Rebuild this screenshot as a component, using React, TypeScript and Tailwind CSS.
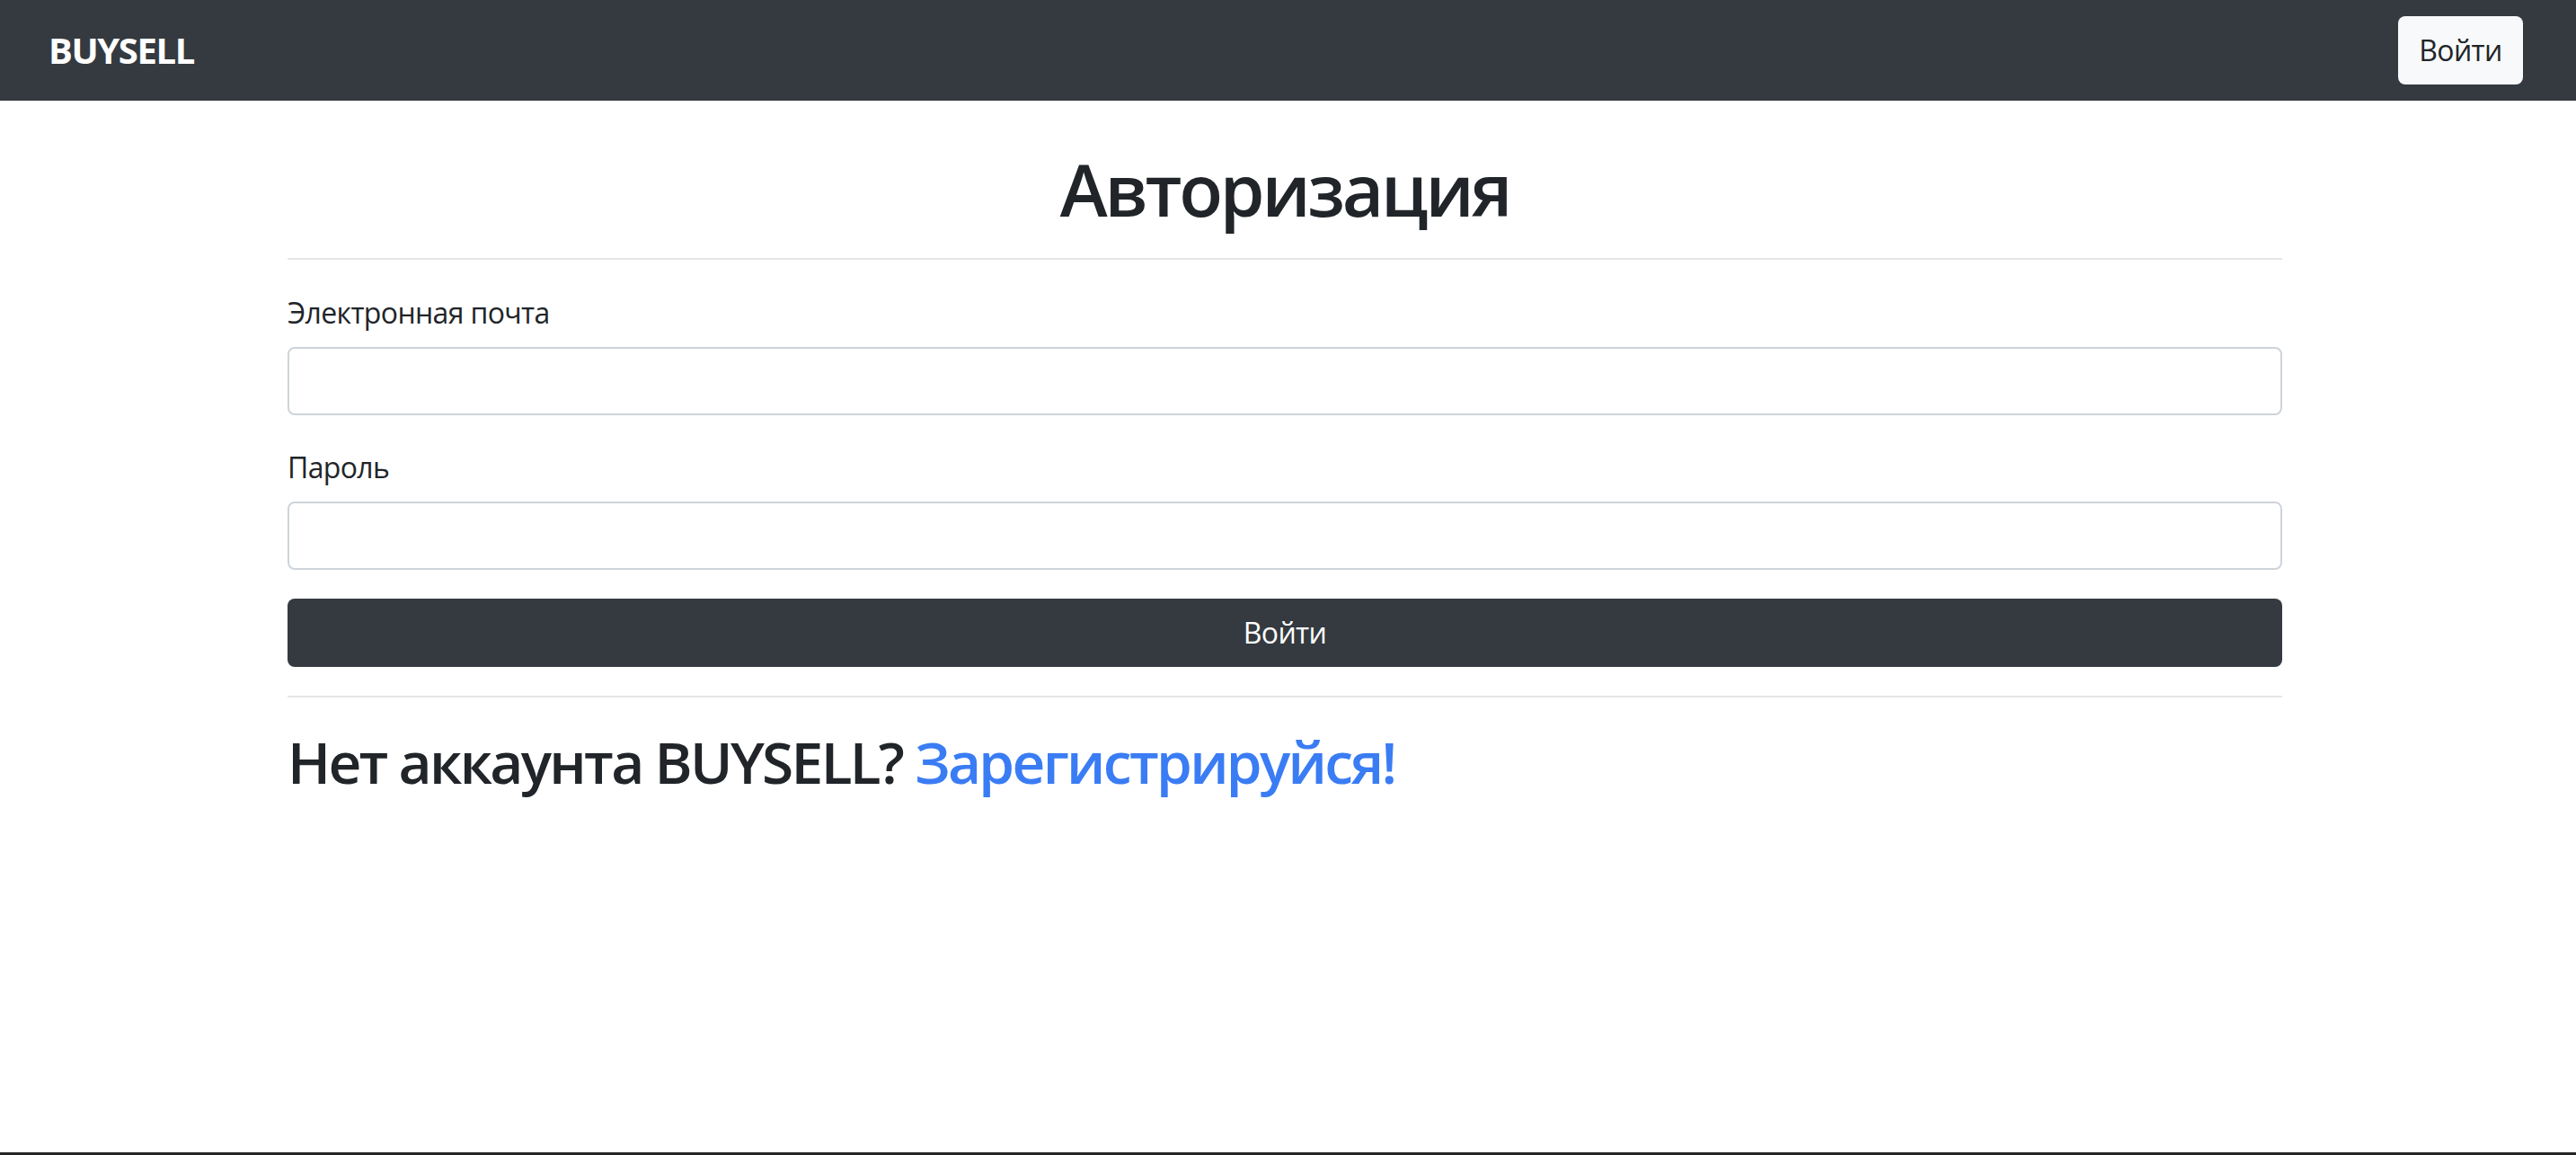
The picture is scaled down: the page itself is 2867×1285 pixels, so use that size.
export default function App() {
  return (
    <div className="min-h-screen bg-white text-[#212529] tracking-[-0.04em] [font-family:'Open_Sans',sans-serif]">
      {/* Navbar */}
      <nav className="flex h-[112px] items-center justify-between bg-[#343a40] pl-[54px] pr-[59px]">
        <a href="#" className="text-[40px] leading-[60px] font-bold tracking-[-0.035em] text-white">
          BUYSELL
        </a>
        <button className="h-[76px] w-[139px] rounded-[8px] bg-[#f8f9fa] text-[32px] leading-[48px] text-[#212529]">
          Войти
        </button>
      </nav>

      <main className="h-[1170px]">
        <div className="ml-[320px] w-[2220px] pt-[50px]">
          <h1 className="text-center text-[80px] leading-[96px] font-semibold tracking-[-0.04em]">
            Авторизация
          </h1>
          <hr className="mt-[29px] border-0 border-t-2 border-[#e6e6e6]" />

          <form className="mt-[35px]" onSubmit={(e) => e.preventDefault()}>
            <label className="block text-[32px] leading-[48px]">Электронная почта</label>
            <input
              type="email"
              className="mt-[14px] block h-[76px] w-full rounded-[8px] border-2 border-[#ced4da] px-[24px] text-[32px] outline-none"
            />

            <label className="mt-[34px] block text-[32px] leading-[48px]">Пароль</label>
            <input
              type="password"
              className="mt-[14px] block h-[76px] w-full rounded-[8px] border-2 border-[#ced4da] px-[24px] text-[32px] outline-none"
            />

            <button
              type="submit"
              className="mt-[32px] block h-[76px] w-full rounded-[8px] bg-[#343a40] text-[32px] leading-[48px] text-white"
            >
              Войти
            </button>
          </form>

          <hr className="mt-[32px] border-0 border-t-2 border-[#e6e6e6]" />

          <h2 className="mt-[33px] text-[64px] leading-[77px] font-semibold tracking-[-0.042em]">
            Нет аккаунта BUYSELL?{" "}
            <a href="#" className="text-[#3a7cf4]">
              Зарегистрируйся!
            </a>
          </h2>
        </div>
      </main>

      <footer className="h-[120px] bg-[#262626]" />
    </div>
  );
}
